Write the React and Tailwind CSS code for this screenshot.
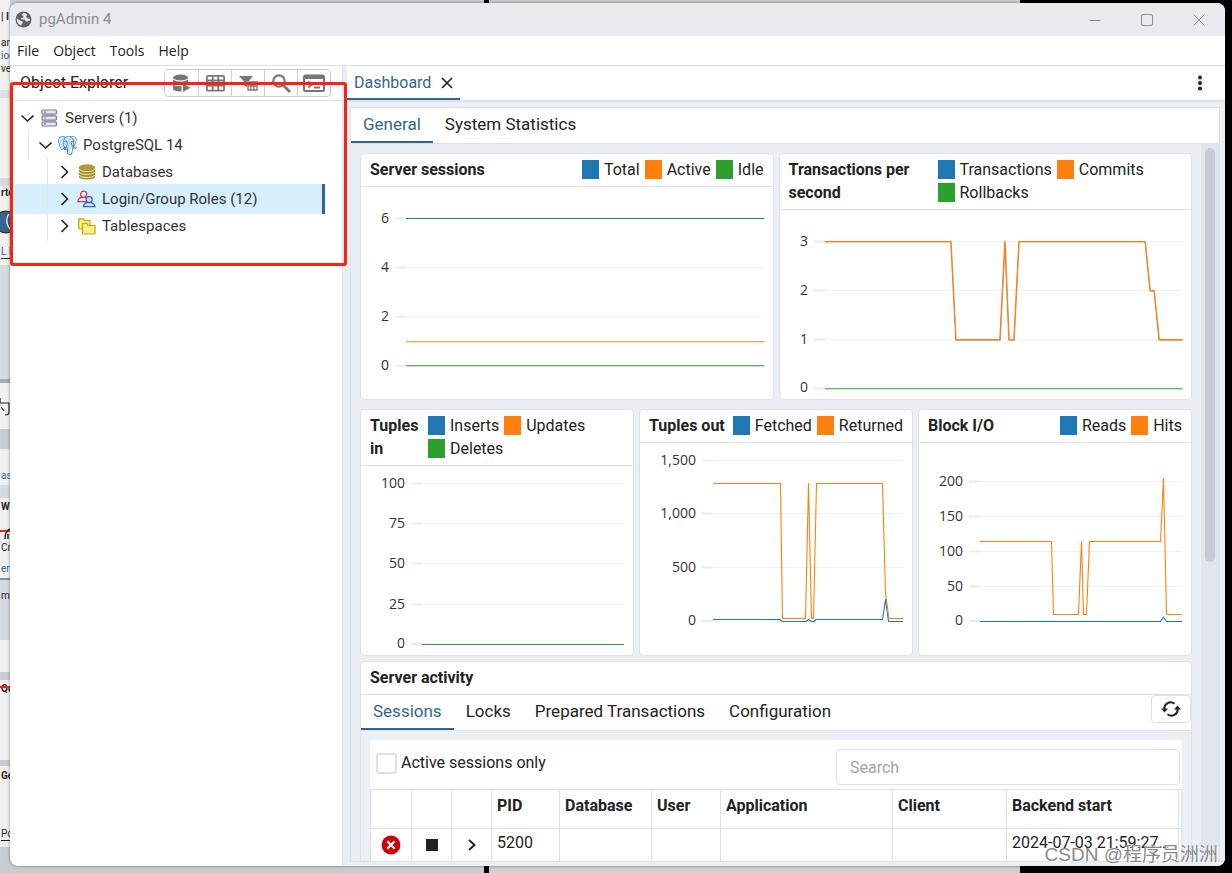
import React from 'react';
import { SiPostgresql } from 'react-icons/si';

const BLUE = '#1f77b4';
const ORANGE = '#ff7f0e';
const GREEN = '#2ca02c';

function TitleBar() {
  return (
    <header className="flex h-[33px] shrink-0 items-center justify-between bg-[#e8eaed] pl-[5px] pr-[12px]">
      <div className="flex items-center gap-[7px]">
        <svg width="17" height="17" viewBox="0 0 17 17">
          <circle cx="8.500" cy="8.500" r="8" fill="#5f6368" />
          <path d="M8.500 1.800 L6.500 4.200 L8.600 4.800 L8.200 6.600 L6 7.200 L6.400 8.600 L9.500 8.600 L11 10.400 L14.800 9.800 A6.500 6.500 0 0 0 15 8 L12.600 7.600 L11 5.800 L12 4.200 L11 2.400Z M1.900 7.600 L5 9.400 L7.800 10.400 L7.300 12.600 L6 14.600 A6.600 6.600 0 0 1 1.900 7.600Z" fill="#e8eaed" />
        </svg>
        <h1 className="text-[15px] text-[#8b8d91]">pgAdmin 4</h1>
      </div>
      <div className="flex items-center gap-[24px] text-[#8b8d91]">
        <button aria-label="Minimize" className="flex h-7 w-7 items-center justify-center">
          <svg width="12" height="12" viewBox="0 0 12 12" stroke="currentColor"><path d="M0.500 6.500H11.500" /></svg>
        </button>
        <button aria-label="Maximize" className="flex h-7 w-7 items-center justify-center">
          <svg width="12" height="12" viewBox="0 0 12 12" fill="none" stroke="currentColor"><rect x="0.500" y="0.500" width="11" height="11" rx="1.500" /></svg>
        </button>
        <button aria-label="Close window" className="flex h-7 w-7 items-center justify-center">
          <svg width="12" height="12" viewBox="0 0 12 12" stroke="currentColor"><path d="M0.500 0.500L11.500 11.500M11.500 0.500L0.500 11.500" /></svg>
        </button>
      </div>
    </header>
  );
}

function MenuBar() {
  return (
    <nav className="flex h-[30px] shrink-0 items-center gap-[14px] border-b border-[#dde0e6] px-[7px] font-['Open_Sans',sans-serif] text-[14px]">
      {['File', 'Object', 'Tools', 'Help'].map((m) => (
        <button key={m}>{m}</button>
      ))}
    </nav>
  );
}

const toolIcons = [
  {
    label: 'Query tool',
    art: (
      <>
        <ellipse cx="8.500" cy="3.500" rx="7.500" ry="3" />
        <path d="M1 5.500Q8.500 10 16 5.500V8.500Q8.500 12.500 1 8.500Z" />
        <path d="M1 10.500Q5 12.700 9.500 12.300V17.500Q4 18 1 15.500Z" />
        <path d="M11 9.500L18.500 13.700L11 18Z" />
      </>
    ),
  },
  {
    label: 'View data',
    art: <path fill="none" stroke="currentColor" strokeWidth="1.800" d="M2.300 1.900H16.700Q18.100 1.900 18.100 3.300V15.200Q18.100 16.600 16.700 16.600H2.300Q0.900 16.600 0.900 15.200V3.300Q0.900 1.900 2.300 1.900ZM1 6.500H18M1 11.500H18M6.700 2V16.500M12.300 2V16.500" />,
  },
  {
    label: 'Filtered rows',
    art: (
      <>
        <path d="M0 2H14L9 8V14L5.500 11.500V8Z" />
        <path fill="white" d="M8 7H19V17H8Z" />
        <path fill="none" stroke="currentColor" strokeWidth="1.300" d="M9 8H18V16H9ZM9 12H18M12 8V16M15 8V16" />
      </>
    ),
  },
  {
    label: 'Search objects',
    art: (
      <>
        <circle cx="7" cy="7" r="5.700" fill="none" stroke="currentColor" strokeWidth="2.200" />
        <path fill="none" stroke="currentColor" strokeWidth="2.800" d="M11 11L18 18" />
      </>
    ),
  },
  {
    label: 'PSQL tool',
    wide: true,
    art: (
      <>
        <rect x="1" y="1.500" width="20" height="15.500" rx="1.500" fill="none" stroke="currentColor" strokeWidth="2" />
        <path d="M1 1H21V5H1Z" />
        <path fill="none" stroke="currentColor" strokeWidth="1.800" d="M5 7.500L9 10.500L5 13.500M11 13.500H17" />
      </>
    ),
  },
];

function Toolbar() {
  return (
    <div className="flex overflow-hidden rounded-[4px] border border-[#c9cfdb] text-[#777]">
      {toolIcons.map((t, i) => (
        <button
          key={t.label}
          aria-label={t.label}
          className={`flex h-[26px] w-[33px] items-center justify-center ${i ? 'border-l border-[#c9cfdb]' : ''}`}
        >
          <svg width={t.wide ? 22 : 19} height="19" viewBox={t.wide ? '0 0 22 19' : '0 0 19 19'} fill="currentColor">
            {t.art}
          </svg>
        </button>
      ))}
    </div>
  );
}

function Chevron({ open }) {
  return (
    <svg width="14" height="14" viewBox="0 0 14 14" fill="none" stroke="#222" strokeWidth="1.600">
      {open ? <path d="M1.500 4.500L7.500 10L13.500 4.500" /> : <path d="M4.500 1L10.500 7L4.500 13" />}
    </svg>
  );
}

function ServersIcon() {
  return (
    <svg width="17" height="18" viewBox="0 0 17 18" fill="#e4e3f0" stroke="#7d7a9c" strokeWidth="1.200">
      <rect x="1" y="1" width="14.500" height="4.200" rx="1.200" />
      <rect x="1" y="6.900" width="14.500" height="4.200" rx="1.200" />
      <rect x="1" y="12.800" width="14.500" height="4.200" rx="1.200" />
      <path d="M3 3.100H5M3 9H5M3 14.900H5" />
    </svg>
  );
}

function ElephantIcon() {
  return (
    <span className="relative flex h-[19px] w-[19px]">
      <svg className="absolute inset-0" width="19" height="19" viewBox="0 0 19 19" fill="#c3e3f6">
        <path d="M1 5Q1 1 6 1.200L13 1Q18 1.500 17.500 5.500L16 11L13 12L12 18L9 17.500L8 12L5 13Q2 11 1 5Z" />
      </svg>
      <SiPostgresql className="relative h-[19px] w-[19px] text-[#1f5f92]" />
    </span>
  );
}

function DatabasesIcon() {
  return (
    <svg width="18" height="16" viewBox="0 0 18 16">
      <path d="M1 3V12.500Q1 15.500 9 15.500T17 12.500V3Z" fill="#a88c23" />
      <path d="M1 5.200Q3 7.600 9 7.600T17 5.200M1 8.200Q3 10.600 9 10.600T17 8.200M1 11.200Q3 13.600 9 13.600T17 11.200" fill="none" stroke="#f3ecc0" strokeWidth="1" />
      <ellipse cx="9" cy="3.200" rx="8" ry="2.900" fill="#b39a36" />
    </svg>
  );
}

function RolesIcon() {
  return (
    <svg width="20" height="18" viewBox="0 0 20 18" strokeWidth="1.300">
      <g fill="#fbe9ea" stroke="#cf3a48">
        <path d="M1 11.800Q1.500 7 6.500 7T12 11.800Z" />
        <circle cx="7" cy="4" r="3.200" />
      </g>
      <g fill="#cfe0f6" stroke="#2f66bd">
        <path d="M6.800 17Q7.300 12.500 12.700 12.500T19 17Z" />
        <circle cx="12.800" cy="9.600" r="3.200" />
      </g>
    </svg>
  );
}

function FoldersIcon() {
  return (
    <svg width="18" height="17" viewBox="0 0 18 17" fill="#f8f080" stroke="#c6a21a" strokeWidth="1.200">
      <path d="M0.800 0.800H5.500L6.500 2.500H12V11H0.800Z" />
      <path d="M4.500 5.500H9L10 7.500H17V16H4.500Z" />
    </svg>
  );
}

const tree = [
  { label: 'Servers (1)', pad: 'pl-[10px]', open: true, Icon: ServersIcon },
  { label: 'PostgreSQL 14', pad: 'pl-[28px]', open: true, Icon: ElephantIcon },
  { label: 'Databases', pad: 'pl-[47px]', Icon: DatabasesIcon },
  { label: 'Login/Group Roles (12)', pad: 'pl-[47px]', Icon: RolesIcon, selected: true },
  { label: 'Tablespaces', pad: 'pl-[47px]', Icon: FoldersIcon },
];

function ObjectExplorer() {
  return (
    <aside className="flex w-[333px] shrink-0 flex-col border-r border-[#dde0e6]">
      <div className="flex h-[35px] shrink-0 items-center justify-between border-b border-[#dde0e6] pl-[10px] pr-[11px]">
        <h2 className="text-[16px]">Object Explorer</h2>
        <Toolbar />
      </div>
      <ul className="pt-[5px]">
        {tree.map(({ label, pad, open, Icon, selected }, i) => (
          <li
            key={label}
            className={`relative -mt-[3px] mr-[17px] flex h-[30px] items-center ${pad} ${selected ? 'border-r-[3px] border-[#326690] bg-[#d6effc]' : ''}`}
          >
            {i > 0 && <span className={`absolute inset-y-0 w-px bg-[#e3e5ea] ${i === 1 ? 'left-[18px]' : 'left-[37px]'}`} />}
            <button aria-label={`Toggle ${label}`} className="mr-[6px] flex"><Chevron open={open} /></button>
            <span className="mr-[6px] flex w-[19px] justify-center"><Icon /></span>
            <span className="text-[15px] text-[#333]">{label}</span>
          </li>
        ))}
      </ul>
    </aside>
  );
}

function Tab({ active, children }) {
  return (
    <button className={`h-full border-b-2 px-[12px] text-[17px] ${active ? 'border-[#326690] text-[#326690]' : 'border-transparent'}`}>
      {children}
    </button>
  );
}

function ChartCard({ title, legend, titleClass, chart }) {
  return (
    <section className="flex flex-col overflow-hidden rounded-[4px] border border-[#dde0e6] bg-white">
      <div className="flex justify-between border-b border-[#dde0e6] px-[9px] pb-[5px] pt-[4px] leading-[23px]">
        <h3 className={`text-[16px] font-bold ${titleClass}`}>{title}</h3>
        <ul className="flex flex-wrap gap-x-[5px] text-[16px]">
          {legend.map(([name, color]) => (
            <li key={name} className="flex items-center gap-[5px]">
              <span className="h-[19px] w-[17px]" style={{ background: color }} />
              {name}
            </li>
          ))}
        </ul>
      </div>
      <Chart {...chart} />
    </section>
  );
}

function Chart({ width, height, left, right, ticks, series }) {
  return (
    <svg className="w-full" viewBox={`0 0 ${width} ${height}`}>
      {ticks.map(([label, y]) => (
        <g key={label}>
          <path d={`M${left} ${y}H${right}`} stroke="#f0f0f0" />
          <path d={`M${left - 11} ${y}H${left}`} stroke="#ebebeb" strokeWidth="2" />
          <text x={left - 17} y={y + 4} textAnchor="end" className="fill-[#333] font-['Open_Sans',sans-serif] text-[14px]">{label}</text>
        </g>
      ))}
      {series.map(([color, d]) => (
        <path key={color + d} d={d} fill="none" stroke={color} strokeWidth="1.100" strokeLinejoin="round" />
      ))}
    </svg>
  );
}

const cardsTop = [
  {
    title: 'Server sessions',
    titleClass: 'shrink-0',
    legend: [['Total', BLUE], ['Active', ORANGE], ['Idle', GREEN]],
    chart: {
      width: 411, height: 212, left: 45, right: 403,
      ticks: [['6', 31.5], ['4', 80.5], ['2', 129.5], ['0', 178.5]],
      series: [[BLUE, 'M45 31.500H403'], [ORANGE, 'M45 154.500H403'], [GREEN, 'M45 178.500H403']],
    },
  },
  {
    title: 'Transactions per second',
    titleClass: 'w-[149px] shrink-0',
    legend: [['Transactions', BLUE], ['Commits', ORANGE], ['Rollbacks', GREEN]],
    chart: {
      width: 411, height: 189, left: 45, right: 402,
      ticks: [['3', 31.5], ['2', 80.5], ['1', 129.5], ['0', 178]],
      series: [
        ['#b9a48f', 'M45 32H171L176 130H220L225 32L229 130H234L239 32H365L370 81H374L379 130H402'],
        [ORANGE, 'M45 31.500H170.500L175.500 129.500H219.500L224.500 31.500L228.500 129.500H233.500L238.500 31.500H364.500L369.500 80.500H373.500L378.500 129.500H402'],
        [GREEN, 'M45 178.500H402'],
      ],
    },
  },
];

const cardsBottom = [
  {
    title: 'Tuples in',
    titleClass: 'w-[58px] shrink-0',
    legend: [['Inserts', BLUE], ['Updates', ORANGE], ['Deletes', GREEN]],
    chart: {
      width: 272, height: 189, left: 61, right: 263,
      ticks: [['100', 17.5], ['75', 57.5], ['50', 97.5], ['25', 138.5], ['0', 178]],
      series: [[GREEN, 'M61 178.500H263']],
    },
  },
  {
    title: 'Tuples out',
    titleClass: 'shrink-0',
    legend: [['Fetched', BLUE], ['Returned', ORANGE]],
    chart: {
      width: 272, height: 212, left: 73, right: 263,
      ticks: [['1,500', 17.5], ['1,000', 70.5], ['500', 124.5], ['0', 178]],
      series: [
        [BLUE, 'M73 176.500H140L142 178.500H166L168.500 176.500L171 178.500H174L176 176.500H242.500L245.500 156.500L248.500 178.500H263'],
        [ORANGE, 'M73 40.500H140.500L142.500 175.500H165.500L168.500 40.500L171.500 175.500H173.500L176.500 40.500H242.500L245.500 150L249 175.500H263'],
      ],
    },
  },
  {
    title: 'Block I/O',
    titleClass: 'shrink-0',
    legend: [['Reads', BLUE], ['Hits', ORANGE]],
    chart: {
      width: 272, height: 212, left: 61, right: 263,
      ticks: [['200', 38.5], ['150', 73.5], ['100', 108.5], ['50', 143.5], ['0', 178]],
      series: [
        [BLUE, 'M61 178.500H241.500L244.500 174L247.500 178.500H263'],
        [ORANGE, 'M61 98.500H132.500L134.500 171.500H159.500L162.500 98.500L164.500 171.500H167.500L170.500 98.500H241.500L244.500 35.500L247.500 170.500L249 171.500H263'],
      ],
    },
  },
];

function ServerActivity() {
  return (
    <section className="rounded-t-[4px] border border-b-0 border-[#dde0e6] bg-white">
      <h3 className="h-[33px] border-b border-[#dde0e6] px-[9px] text-[16px] font-bold leading-[32px]">Server activity</h3>
      <div className="flex h-[36px] items-start justify-between border-b border-[#dde0e6]">
        <div className="flex h-[35px]">
          <Tab active>Sessions</Tab>
          <Tab>Locks</Tab>
          <Tab>Prepared Transactions</Tab>
          <Tab>Configuration</Tab>
        </div>
        <button aria-label="Refresh" className="flex h-[28px] w-[40px] items-center justify-center rounded-[4px] border border-[#dde0e6]">
          <svg width="20" height="16" viewBox="0 0 20 16" fill="none" stroke="#222" strokeWidth="2">
            <path d="M13.500 2.700A6.300 6.300 0 0 0 3.500 9" />
            <path d="M6.500 13.300A6.300 6.300 0 0 0 16.500 7" />
            <path d="M0 7.500H7L3.500 11.500ZM13 8.500H20L16.500 4.500Z" fill="#222" stroke="none" />
          </svg>
        </button>
      </div>
      <div className="bg-[#ebeef3] px-[9px] pt-[9px]">
        <div className="bg-white">
          <div className="flex h-[49px] items-start justify-between pl-[6px] pr-[2px] pt-[9px]">
            <label className="flex items-center gap-[4px] pt-[3px] text-[16px] leading-[22px]">
              <input type="checkbox" className="h-[21px] w-[21px] appearance-none rounded-[3px] border-2 border-[#dde0e6] bg-white" />
              Active sessions only
            </label>
            <input
              aria-label="Search"
              placeholder="Search"
              className="h-[36px] w-[344px] rounded-[4px] border border-[#dde0e6] px-[13px] text-[16px] placeholder:text-[#a3a3a3]"
            />
          </div>
          <table className="w-full table-fixed border-collapse text-left text-[16px]">
            <colgroup>
              <col className="w-[41px]" />
              <col className="w-[40px]" />
              <col className="w-[40px]" />
              <col className="w-[68px]" />
              <col className="w-[92px]" />
              <col className="w-[69px]" />
              <col className="w-[172px]" />
              <col className="w-[114px]" />
              <col />
              <col className="w-[3px]" />
            </colgroup>
            <thead>
              <tr className="h-[39px]">
                {['', '', '', 'PID', 'Database', 'User', 'Application', 'Client', 'Backend start', ''].map((h, i) => (
                  <th key={i} className={`border border-[#dde0e6] pb-[6px] font-bold ${h ? 'px-[5px]' : ''}`}>{h}</th>
                ))}
              </tr>
            </thead>
            <tbody>
              <tr className="h-[39px]">
                <td className="border border-[#dde0e6] pb-[6px]">
                  <button aria-label="Terminate session" className="mx-auto block">
                    <svg width="20" height="20" viewBox="0 0 20 20">
                      <circle cx="10" cy="10" r="9.400" fill="#cc0000" />
                      <path d="M6.300 6.300L13.700 13.700M13.700 6.300L6.300 13.700" stroke="white" strokeWidth="2.200" />
                    </svg>
                  </button>
                </td>
                <td className="border border-[#dde0e6] pb-[6px]">
                  <button aria-label="Cancel query" className="mx-auto block h-[12px] w-[12px] bg-[#222]" />
                </td>
                <td className="border border-[#dde0e6] pb-[6px]">
                  <button aria-label="View details" className="mx-auto block">
                    <svg width="12" height="12" viewBox="0 0 12 12" fill="none" stroke="#222" strokeWidth="1.900"><path d="M3 1L8.500 6L3 11" /></svg>
                  </button>
                </td>
                <td className="border border-[#dde0e6] px-[5px] pb-[10px]">5200</td>
                <td className="border border-[#dde0e6]" />
                <td className="border border-[#dde0e6]" />
                <td className="border border-[#dde0e6]" />
                <td className="border border-[#dde0e6]" />
                <td className="truncate border border-[#dde0e6] px-[5px] pb-[10px]">2024-07-03 21:59:27 CST</td>
                <td className="border border-[#dde0e6]" />
              </tr>
            </tbody>
          </table>
        </div>
      </div>
    </section>
  );
}

function Dashboard() {
  return (
    <main className="flex min-w-0 flex-1 flex-col bg-[#ebeef3]">
      <div className="flex h-[36px] shrink-0 items-center justify-between border-b-2 border-[#dde0e6] bg-white pr-[17px]">
        <div className="flex h-[34px] items-center gap-[10px] border-b-2 border-[#326690] px-[7px] pt-[2px]">
          <button className="text-[16px] text-[#326690]">Dashboard</button>
          <button aria-label="Close tab">
            <svg width="12" height="12" viewBox="0 0 12 12" stroke="#222" strokeWidth="1.600"><path d="M1 1L11 11M11 1L1 11" /></svg>
          </button>
        </div>
        <button aria-label="More options">
          <svg width="16" height="16" viewBox="0 0 16 16" fill="#222"><circle cx="8" cy="2.500" r="2" /><circle cx="8" cy="8" r="2" /><circle cx="8" cy="13.500" r="2" /></svg>
        </button>
      </div>
      <div className="mb-[4px] ml-[3px] mr-[5px] mt-[5px] flex min-h-0 flex-1 flex-col overflow-hidden border border-[#dde0e6]">
        <div className="flex h-[36px] shrink-0 border-b border-[#dde0e6] bg-white">
          <Tab active>General</Tab>
          <Tab>System Statistics</Tab>
        </div>
        <div className="flex min-h-0 flex-1">
          <div className="min-w-0 flex-1 overflow-hidden pl-[9px] pr-[9px] pt-[9px]">
            <div className="grid grid-cols-2 gap-[5px]">
              {cardsTop.map((c) => <ChartCard key={c.title} {...c} />)}
            </div>
            <div className="mb-[5px] mt-[9px] grid grid-cols-3 gap-[5px]">
              {cardsBottom.map((c) => <ChartCard key={c.title} {...c} />)}
            </div>
            <ServerActivity />
          </div>
          <div className="w-[18px] shrink-0 bg-[#e1e5ed] px-[4px] pt-[4px]">
            <div className="h-[58%] rounded-full bg-[#c4cad6]" />
          </div>
        </div>
      </div>
    </main>
  );
}

const fragments = [
  ['top-[11px] font-bold', '| I'], ['top-[37px]', 'an'], ['top-[50px] text-[#326690]', 'ion'], ['top-[63px]', 've'],
  ['top-[187px] font-bold', 'rte'], ['top-[246px] text-[#326690] border-b border-[#222]', 'L D'], ['top-[470px] text-[#326690]', 'as'],
  ['top-[501px] font-bold', 'W'], ['top-[542px]', 'Cre'], ['top-[563px] text-[#326690]', 'er'], ['top-[590px]', 'me'],
  ['top-[683px] font-bold', 'Qu'], ['top-[770px] font-bold', 'Ge'], ['top-[828px] border-b border-[#222]', 'Po'],
];

const bands = [
  ['top-0 h-[90px]', 'bg-[#f1f1f1]'], ['top-[90px] h-[8px]', 'bg-[#dde1e7]'], ['top-[98px] h-[80px]', 'bg-[#f1f1f1]'],
  ['top-[178px] h-[8px]', 'bg-[#d5d9df]'], ['top-[186px] h-[79px]', 'bg-[#f1f1f1]'], ['top-[265px] h-[114px]', 'bg-[#d7dbe1]'],
  ['top-[379px] h-[4px]', 'bg-[#a9abae]'], ['top-[383px] h-[46px]', 'bg-[#f1f1f1]'], ['top-[429px] h-[20px]', 'bg-[#c8ccd2]'],
  ['top-[449px] h-[36px]', 'bg-[#f1f1f1]'], ['top-[485px] h-[13px]', 'bg-[#d7dbe1]'], ['top-[498px] h-[80px]', 'bg-[#f1f1f1]'],
  ['top-[578px] h-[62px]', 'bg-[#d7dbe1]'], ['top-[640px] h-[32px]', 'bg-[#f1f1f1]'], ['top-[672px] h-[8px]', 'bg-[#c8ccd2]'],
  ['top-[680px] h-[80px]', 'bg-[#f1f1f1]'], ['top-[760px] h-[6px]', 'bg-[#c8ccd2]'], ['top-[766px] h-[81px]', 'bg-[#f1f1f1]'],
];

function Backdrop() {
  return (
    <div aria-hidden="true" className="absolute inset-0 overflow-hidden bg-[#c9cbce]">
      <div className="absolute inset-y-0 left-[484px] w-[5px] bg-black" />
      <div className="absolute inset-y-0 left-[489px] right-[212px] bg-[#cfcfcf]" />
      <div className="absolute inset-y-0 right-0 w-[212px] bg-black" />
      <div className="absolute inset-y-0 left-0 w-[10px] overflow-hidden bg-[#c8ccd2]">
        {bands.map(([pos, color]) => <div key={pos} className={`absolute inset-x-0 ${pos} ${color}`} />)}
        <svg className="absolute left-0 top-[209px]" width="10" height="26" viewBox="0 0 10 26">
          <circle cx="6" cy="13" r="11" fill="#326690" stroke="#222" />
          <path d="M9 5Q6 8 7 14Q8 18 10 20" fill="none" stroke="white" strokeWidth="1.200" />
        </svg>
        <svg className="absolute left-0 top-[398px]" width="10" height="20" viewBox="0 0 10 20" fill="none" stroke="#222" strokeWidth="1.200">
          <path d="M0 5H9V14Q9 17 5 17M1 9L4 13M0 0V5" />
        </svg>
        {fragments.map(([pos, text]) => (
          <span key={text} className={`absolute left-px whitespace-nowrap text-[10px] leading-[12px] ${pos}`}>{text}</span>
        ))}
        <div className="absolute inset-x-0 top-[530px] h-[2px] bg-[#f82216]" />
        <svg className="absolute bottom-0 left-0 top-[528px]" width="10" height="12" viewBox="0 0 10 12" fill="none" stroke="#222" strokeWidth="1.400">
          <path d="M5 11Q5 3 10 1M8 11V6" />
        </svg>
        <div className="absolute inset-x-0 top-[686px] h-[2px] bg-[#f82216]" />
        <div className="absolute inset-x-0 top-[578px] h-[2px] bg-[#6b93b5]" />
      </div>
    </div>
  );
}

export default function App() {
  return (
    <div className="relative h-screen overflow-hidden pb-[7px] pl-[10px] pr-[7px] pt-[3px] font-[Roboto,'Noto_Sans_CJK_SC',sans-serif] text-[#222]">
      <Backdrop />
      <div className="relative flex h-full flex-col overflow-hidden rounded-[8px] bg-white shadow-[0_0_3px_rgba(0,0,0,0.5)]">
        <TitleBar />
        <MenuBar />
        <div className="flex min-h-0 flex-1">
          <ObjectExplorer />
          <div className="w-[4px] shrink-0 bg-[#ebeef3]" />
          <Dashboard />
        </div>
      </div>
      <div className="pointer-events-none absolute left-[10px] top-[82px] h-[184px] w-[337px] rounded-[3px] border-[3px] border-[#f82216]" />
      <p className="pointer-events-none absolute bottom-[4px] right-[14px] font-['Liberation_Sans','Noto_Sans_CJK_SC',sans-serif] text-[19px] leading-[28px] text-[#8a8a8a] [text-shadow:1px_1px_0_white]">
        CSDN @程序员洲洲
      </p>
    </div>
  );
}
